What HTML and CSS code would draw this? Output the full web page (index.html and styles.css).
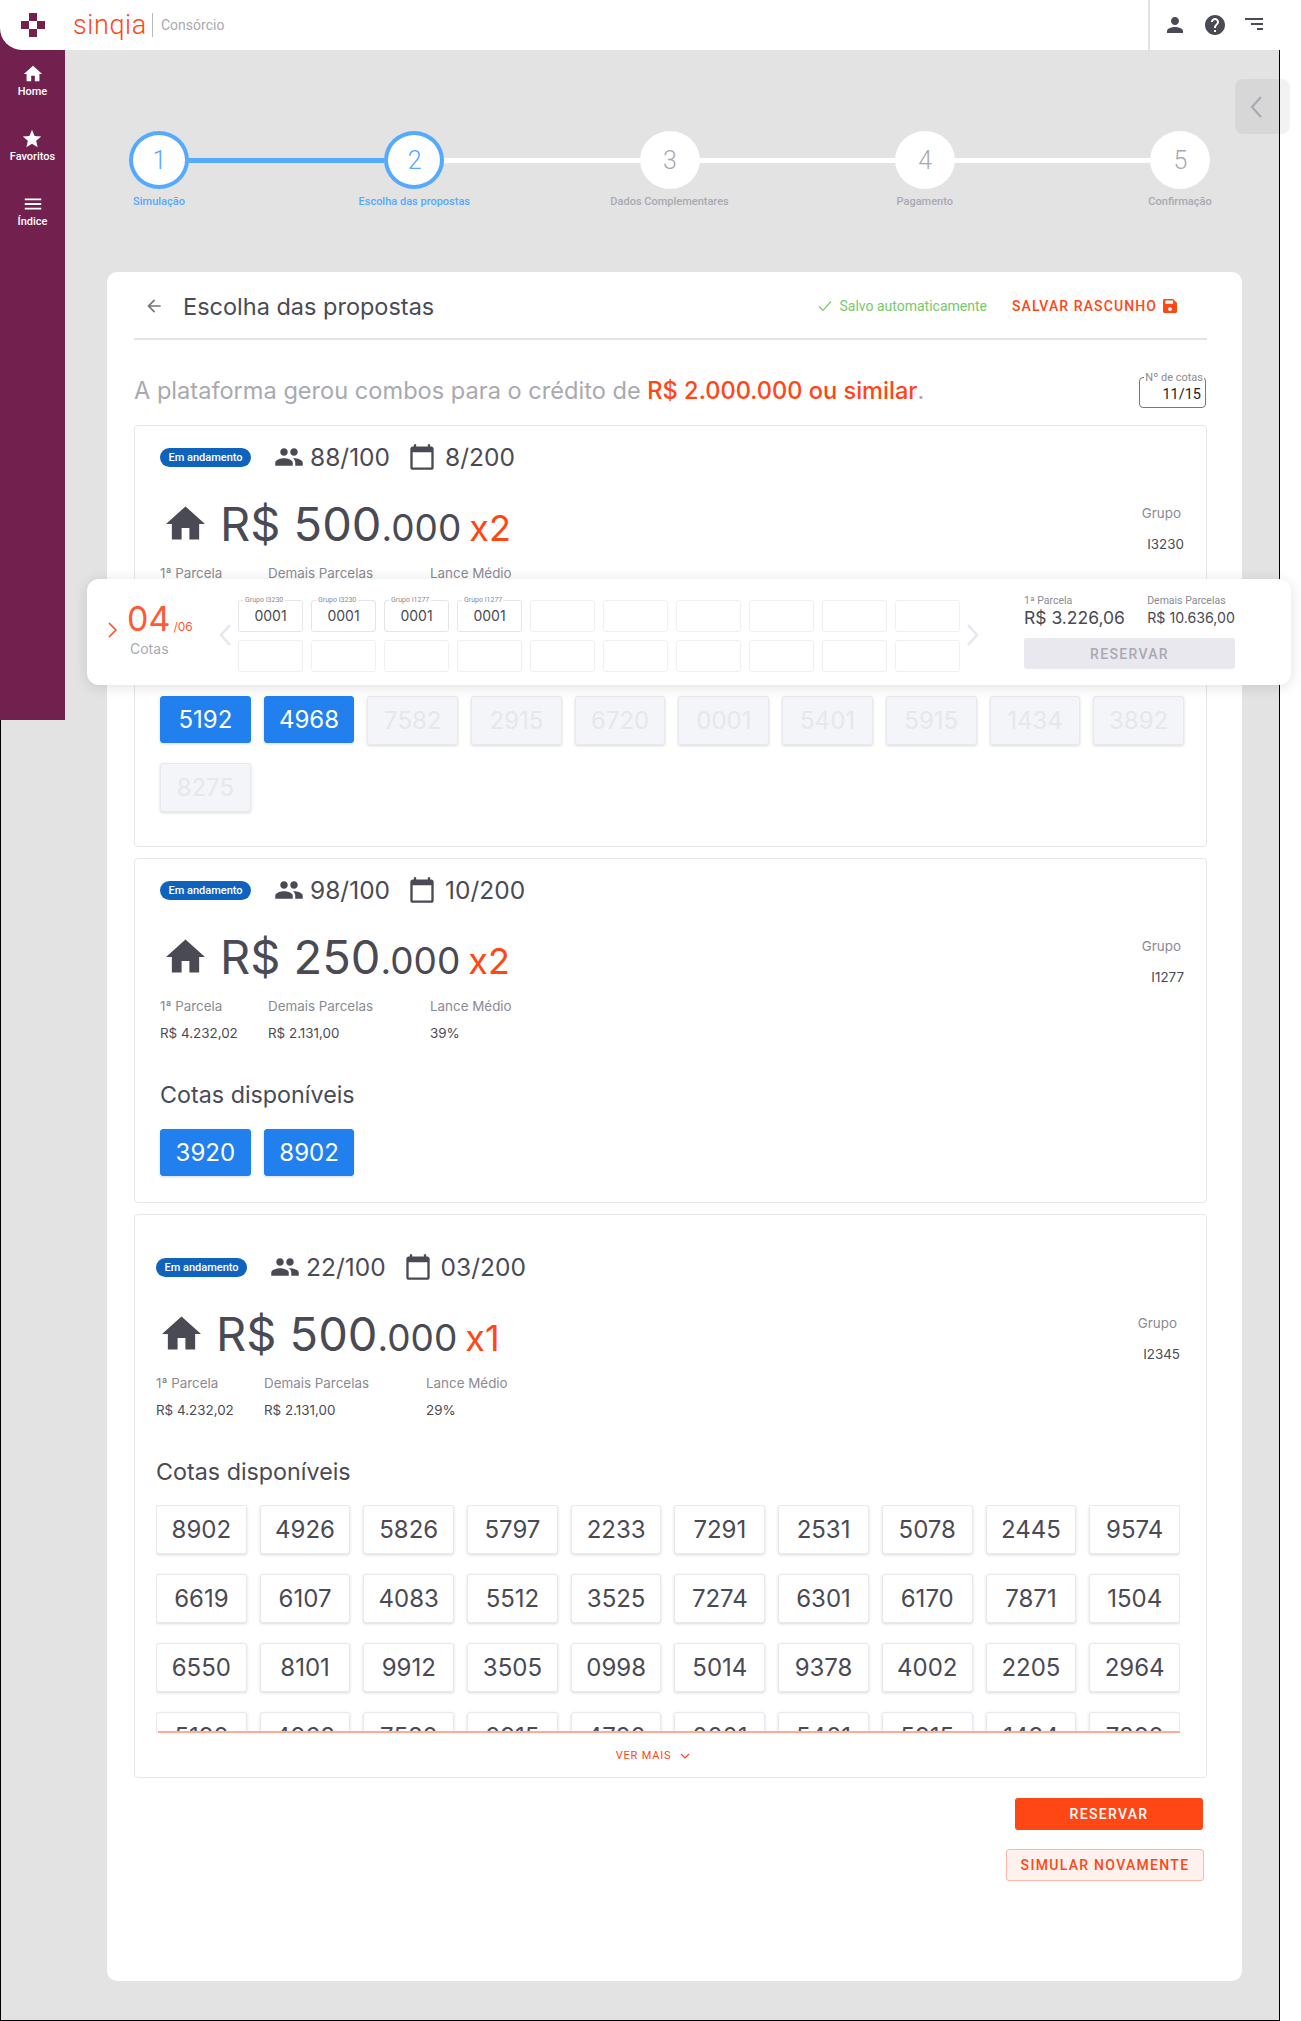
FILE: index.html
```html
<!DOCTYPE html>
<html lang="pt-BR">
<head>
    <meta charset="UTF-8">
    <meta name="viewport" content="width=device-width, initial-scale=1.0">
    <title>Sinqia Consórcio - Escolha das propostas</title>
    <link rel="stylesheet" href="styles.css">
</head>
<body>
    <header class="topbar">
        <div class="brand">
            <svg class="brand-mark" viewBox="0 0 24 24" width="24" height="24">
                <rect x="8" y="0" width="8" height="8" fill="#72214f"/>
                <rect x="0" y="8" width="8" height="8" fill="#72214f"/>
                <rect x="16" y="8" width="8" height="8" fill="#72214f"/>
                <rect x="8" y="16" width="8" height="8" fill="#72214f"/>
            </svg>
            <span class="brand-name">sinqia</span>
            <span class="brand-product">Consórcio</span>
        </div>
        <div class="topbar-actions">
            <svg class="action-icon" viewBox="0 0 24 24"><path d="M12 12c2.21 0 4-1.79 4-4s-1.79-4-4-4-4 1.79-4 4 1.79 4 4 4zm0 2c-2.67 0-8 1.34-8 4v2h16v-2c0-2.66-5.33-4-8-4z"/></svg>
            <svg class="action-icon" viewBox="0 0 24 24"><path d="M12 2C6.48 2 2 6.48 2 12s4.48 10 10 10 10-4.48 10-10S17.52 2 12 2zm1 17h-2v-2h2v2zm2.07-7.75l-.9.92C13.45 12.9 13 13.5 13 15h-2v-.5c0-1.1.45-2.1 1.17-2.83l1.24-1.26c.37-.36.59-.86.59-1.41 0-1.1-.9-2-2-2s-2 .9-2 2H8c0-2.21 1.79-4 4-4s4 1.79 4 4c0 .88-.36 1.68-.93 2.25z"/></svg>
            <svg class="action-icon" viewBox="0 0 24 24"><path d="M3 5h18v2H3zM9 10h12v2H9zM15 15h6v2h-6z"/></svg>
        </div>
    </header>

    <div class="frame">
        <nav class="sidebar">
            <a class="side-item"><svg viewBox="0 0 24 24"><path d="M10 20v-6h4v6h5v-8h3L12 3 2 12h3v8z"/></svg>Home</a>
            <a class="side-item"><svg viewBox="0 0 24 24"><path d="M12 17.27L18.18 21l-1.64-7.03L22 9.24l-7.19-.61L12 2 9.19 8.63 2 9.24l5.46 4.73L5.82 21z"/></svg>Favoritos</a>
            <a class="side-item"><svg viewBox="0 0 24 24"><path d="M3 18h18v-2H3v2zm0-5h18v-2H3v2zm0-7v2h18V6H3z"/></svg>Índice</a>
        </nav>

        <main class="main">
            <div class="stepper">
                <div class="step done"><div class="step-circle">1</div><div class="step-label">Simulação</div></div>
                <div class="step-line done"></div>
                <div class="step done"><div class="step-circle">2</div><div class="step-label">Escolha das propostas</div></div>
                <div class="step-line"></div>
                <div class="step"><div class="step-circle">3</div><div class="step-label">Dados Complementares</div></div>
                <div class="step-line"></div>
                <div class="step"><div class="step-circle">4</div><div class="step-label">Pagamento</div></div>
                <div class="step-line"></div>
                <div class="step"><div class="step-circle">5</div><div class="step-label">Confirmação</div></div>
            </div>

            <section class="panel">
                <div class="panel-head">
                    <svg class="back-icon" viewBox="0 0 24 24"><path d="M20 11H7.83l5.59-5.59L12 4l-8 8 8 8 1.41-1.41L7.83 13H20v-2z"/></svg>
                    <h1 class="panel-title">Escolha das propostas</h1>
                    <span class="saved">
                        <svg viewBox="0 0 14 14"><path d="M1 7.5l4 4 8-9" fill="none" stroke="#77c96a" stroke-width="1.2"/></svg>
                        Salvo automaticamente
                    </span>
                    <a class="draft">SALVAR RASCUNHO
                        <svg viewBox="0 0 18 18"><path d="M13 0H2C.9 0 0 .9 0 2v14c0 1.1.9 2 2 2h14c1.1 0 2-.9 2-2V5l-5-5zM9 15.5c-1.4 0-2.5-1.1-2.5-2.5s1.1-2.5 2.5-2.5 2.5 1.1 2.5 2.5-1.1 2.5-2.5 2.5zM13 6H3V2h10v4z"/></svg>
                    </a>
                </div>

                <div class="intro">
                    <p class="intro-text">A plataforma gerou combos para o crédito de <strong>R$ 2.000.000 ou similar</strong>.</p>
                    <div class="quota-field">
                        <span class="quota-legend">Nº de cotas</span>
                        11/15
                    </div>
                </div>

                <article class="card card-first">
                    <div class="card-top">
                        <div class="card-info">
                            <div class="card-head">
                                <span class="badge">Em andamento</span>
                                <svg class="head-icon people" viewBox="0 0 24 24"><path d="M16 11c1.66 0 2.99-1.34 2.99-3S17.66 5 16 5c-1.66 0-3 1.34-3 3s1.34 3 3 3zm-8 0c1.66 0 2.99-1.34 2.99-3S9.66 5 8 5C6.34 5 5 6.34 5 8s1.34 3 3 3zm0 2c-2.33 0-7 1.17-7 3.5V19h14v-2.5c0-2.33-4.67-3.5-7-3.5zm8 0c-.29 0-.62.02-.97.05 1.16.84 1.97 1.97 1.97 3.45V19h6v-2.5c0-2.33-4.67-3.5-7-3.5z"/></svg>
                                <span class="head-value">88/100</span>
                                <svg class="head-icon calendar" viewBox="0 0 24 24"><path d="M20 3h-1V1h-2v2H7V1H5v2H4c-1.1 0-2 .9-2 2v16c0 1.1.9 2 2 2h16c1.1 0 2-.9 2-2V5c0-1.1-.9-2-2-2zm0 18H4V8h16v13z"/></svg>
                                <span class="head-value">8/200</span>
                            </div>
                            <div class="amount">
                                <svg class="amount-icon" viewBox="2 3 20 17"><path d="M10 20v-6h4v6h5v-8h3L12 3 2 12h3v8z"/></svg>
                                <span class="amount-main">R$ 500</span><span class="amount-sub">.000</span>
                                <span class="amount-times">x2</span>
                            </div>
                            <div class="terms">
                                <div class="term term-a"><span>1ª Parcela</span><b>R$ 4.232,02</b></div>
                                <div class="term term-b"><span>Demais Parcelas</span><b>R$ 2.131,00</b></div>
                                <div class="term"><span>Lance Médio</span><b>39%</b></div>
                            </div>
                        </div>
                        <div class="group"><span>Grupo</span><b>I3230</b></div>
                    </div>
                    <h2 class="quotas-title">Cotas disponíveis</h2>
                    <div class="tiles">
                        <span class="tile selected">5192</span>
                        <span class="tile selected">4968</span>
                        <span class="tile disabled">7582</span>
                        <span class="tile disabled">2915</span>
                        <span class="tile disabled">6720</span>
                        <span class="tile disabled">0001</span>
                        <span class="tile disabled">5401</span>
                        <span class="tile disabled">5915</span>
                        <span class="tile disabled">1434</span>
                        <span class="tile disabled">3892</span>
                        <span class="tile disabled">8275</span>
                    </div>
                </article>

                <article class="card">
                    <div class="card-top">
                        <div class="card-info">
                            <div class="card-head">
                                <span class="badge">Em andamento</span>
                                <svg class="head-icon people" viewBox="0 0 24 24"><path d="M16 11c1.66 0 2.99-1.34 2.99-3S17.66 5 16 5c-1.66 0-3 1.34-3 3s1.34 3 3 3zm-8 0c1.66 0 2.99-1.34 2.99-3S9.66 5 8 5C6.34 5 5 6.34 5 8s1.34 3 3 3zm0 2c-2.33 0-7 1.17-7 3.5V19h14v-2.5c0-2.33-4.67-3.5-7-3.5zm8 0c-.29 0-.62.02-.97.05 1.16.84 1.97 1.97 1.97 3.45V19h6v-2.5c0-2.33-4.67-3.5-7-3.5z"/></svg>
                                <span class="head-value">98/100</span>
                                <svg class="head-icon calendar" viewBox="0 0 24 24"><path d="M20 3h-1V1h-2v2H7V1H5v2H4c-1.1 0-2 .9-2 2v16c0 1.1.9 2 2 2h16c1.1 0 2-.9 2-2V5c0-1.1-.9-2-2-2zm0 18H4V8h16v13z"/></svg>
                                <span class="head-value">10/200</span>
                            </div>
                            <div class="amount">
                                <svg class="amount-icon" viewBox="2 3 20 17"><path d="M10 20v-6h4v6h5v-8h3L12 3 2 12h3v8z"/></svg>
                                <span class="amount-main">R$ 250</span><span class="amount-sub">.000</span>
                                <span class="amount-times">x2</span>
                            </div>
                            <div class="terms">
                                <div class="term term-a"><span>1ª Parcela</span><b>R$ 4.232,02</b></div>
                                <div class="term term-b"><span>Demais Parcelas</span><b>R$ 2.131,00</b></div>
                                <div class="term"><span>Lance Médio</span><b>39%</b></div>
                            </div>
                        </div>
                        <div class="group"><span>Grupo</span><b>I1277</b></div>
                    </div>
                    <h2 class="quotas-title">Cotas disponíveis</h2>
                    <div class="tiles">
                        <span class="tile selected">3920</span>
                        <span class="tile selected">8902</span>
                    </div>
                </article>

                <article class="card card-last">
                    <div class="card-top">
                        <div class="card-info">
                            <div class="card-head">
                                <span class="badge">Em andamento</span>
                                <svg class="head-icon people" viewBox="0 0 24 24"><path d="M16 11c1.66 0 2.99-1.34 2.99-3S17.66 5 16 5c-1.66 0-3 1.34-3 3s1.34 3 3 3zm-8 0c1.66 0 2.99-1.34 2.99-3S9.66 5 8 5C6.34 5 5 6.34 5 8s1.34 3 3 3zm0 2c-2.33 0-7 1.17-7 3.5V19h14v-2.5c0-2.33-4.67-3.5-7-3.5zm8 0c-.29 0-.62.02-.97.05 1.16.84 1.97 1.97 1.97 3.45V19h6v-2.5c0-2.33-4.67-3.5-7-3.5z"/></svg>
                                <span class="head-value">22/100</span>
                                <svg class="head-icon calendar" viewBox="0 0 24 24"><path d="M20 3h-1V1h-2v2H7V1H5v2H4c-1.1 0-2 .9-2 2v16c0 1.1.9 2 2 2h16c1.1 0 2-.9 2-2V5c0-1.1-.9-2-2-2zm0 18H4V8h16v13z"/></svg>
                                <span class="head-value">03/200</span>
                            </div>
                            <div class="amount">
                                <svg class="amount-icon" viewBox="2 3 20 17"><path d="M10 20v-6h4v6h5v-8h3L12 3 2 12h3v8z"/></svg>
                                <span class="amount-main">R$ 500</span><span class="amount-sub">.000</span>
                                <span class="amount-times">x1</span>
                            </div>
                            <div class="terms">
                                <div class="term term-a"><span>1ª Parcela</span><b>R$ 4.232,02</b></div>
                                <div class="term term-b"><span>Demais Parcelas</span><b>R$ 2.131,00</b></div>
                                <div class="term"><span>Lance Médio</span><b>29%</b></div>
                            </div>
                        </div>
                        <div class="group"><span>Grupo</span><b>I2345</b></div>
                    </div>
                    <h2 class="quotas-title">Cotas disponíveis</h2>
                    <div class="tiles tiles-clipped">
                        <span class="tile">8902</span><span class="tile">4926</span><span class="tile">5826</span><span class="tile">5797</span><span class="tile">2233</span><span class="tile">7291</span><span class="tile">2531</span><span class="tile">5078</span><span class="tile">2445</span><span class="tile">9574</span>
                        <span class="tile">6619</span><span class="tile">6107</span><span class="tile">4083</span><span class="tile">5512</span><span class="tile">3525</span><span class="tile">7274</span><span class="tile">6301</span><span class="tile">6170</span><span class="tile">7871</span><span class="tile">1504</span>
                        <span class="tile">6550</span><span class="tile">8101</span><span class="tile">9912</span><span class="tile">3505</span><span class="tile">0998</span><span class="tile">5014</span><span class="tile">9378</span><span class="tile">4002</span><span class="tile">2205</span><span class="tile">2964</span>
                        <span class="tile">5192</span><span class="tile">4968</span><span class="tile">7582</span><span class="tile">2915</span><span class="tile">4720</span><span class="tile">0001</span><span class="tile">5401</span><span class="tile">5915</span><span class="tile">1434</span><span class="tile">7892</span>
                    </div>
                    <a class="more">VER MAIS
                        <svg viewBox="0 0 10 6"><path d="M1 1l4 4 4-4" fill="none" stroke="#ff4615" stroke-width="1.2"/></svg>
                    </a>
                </article>

                <div class="panel-actions">
                    <button class="btn btn-primary">RESERVAR</button>
                    <button class="btn btn-outline">SIMULAR NOVAMENTE</button>
                </div>
            </section>
        </main>

        <!-- barra flutuante com as cotas escolhidas -->
        <aside class="cart">
            <svg class="cart-toggle" viewBox="0 0 9 16"><path d="M1 1l7 7-7 7" fill="none" stroke="#ff4615" stroke-width="1.5"/></svg>
            <div class="cart-count">
                <div><span class="count-now">04</span><span class="count-total">/06</span></div>
                <div class="count-label">Cotas</div>
            </div>
            <svg class="cart-arrow" viewBox="0 0 12 22"><path d="M11 1L2 11l9 10" fill="none" stroke="#e6e7ee" stroke-width="2.5"/></svg>
            <div class="slots">
                <div class="slot filled"><span class="slot-legend">Grupo I3230</span>0001</div>
                <div class="slot filled"><span class="slot-legend">Grupo I3230</span>0001</div>
                <div class="slot filled"><span class="slot-legend">Grupo I1277</span>0001</div>
                <div class="slot filled"><span class="slot-legend">Grupo I1277</span>0001</div>
                <div class="slot"></div><div class="slot"></div><div class="slot"></div><div class="slot"></div><div class="slot"></div><div class="slot"></div>
                <div class="slot"></div><div class="slot"></div><div class="slot"></div><div class="slot"></div><div class="slot"></div><div class="slot"></div><div class="slot"></div><div class="slot"></div><div class="slot"></div><div class="slot"></div>
            </div>
            <svg class="cart-arrow" viewBox="0 0 12 22"><path d="M1 1l9 10-9 10" fill="none" stroke="#e6e7ee" stroke-width="2.5"/></svg>
            <div class="cart-summary">
                <div class="summary-values">
                    <div class="summary-first"><span>1ª Parcela</span><b>R$ 3.226,06</b></div>
                    <div class="summary-rest"><span>Demais Parcelas</span><b>R$ 10.636,00</b></div>
                </div>
                <button class="btn btn-disabled">RESERVAR</button>
            </div>
        </aside>

        <div class="side-tab">
            <svg viewBox="0 0 12 22"><path d="M11 1L2 11l9 10" fill="none" stroke="#a9a9b2" stroke-width="2.2"/></svg>
        </div>
    </div>
</body>
</html>
```

FILE: styles.css
```css
* {
    margin: 0;
    padding: 0;
    box-sizing: border-box;
}

body {
    font-family: Inter, Roboto, sans-serif;
    background: white;
    color: #4a4a55;
    width: 1301px;
}

/* topo */

.topbar {
    width: 1280px;
    height: 50px;
    display: flex;
    background: linear-gradient(to right, #72214f 30px, white 30px);
}

.brand {
    flex: 1;
    display: flex;
    align-items: center;
    background: white;
    border-bottom-left-radius: 22px;
    padding-left: 21px;
}

.brand-mark {
    flex: none;
}

.brand-name {
    margin-left: 28px;
    width: 80px;
    height: 24px;
    display: flex;
    align-items: center;
    font-family: Roboto, sans-serif;
    font-weight: 300;
    font-size: 27px;
    letter-spacing: 0.6px;
    color: #ff4615;
    border-right: 1px solid #bbb;
}

.brand-product {
    margin-left: 8px;
    font-family: Roboto, sans-serif;
    font-size: 14px;
    color: #a9a9b2;
}

.topbar-actions {
    width: 132px;
    flex: none;
    display: flex;
    align-items: center;
    gap: 15.5px;
    padding-left: 13px;
    background: white;
    border-left: 2px solid #e3e3e3;
}

.action-icon {
    width: 24px;
    height: 24px;
    fill: #4a4a55;
}

/* moldura */

.frame {
    position: relative;
    width: 1280px;
    height: 1971px;
    display: flex;
    align-items: flex-start;
    background: #e3e3e3;
    border-left: 1px solid black;
    border-right: 1px solid black;
    border-bottom: 1px solid black;
}

.sidebar {
    flex: none;
    width: 65px;
    height: 670px;
    margin-left: -1px;
    background: #72214f;
    display: flex;
    flex-direction: column;
    align-items: center;
    padding-top: 13px;
}

.side-item {
    height: 65px;
    display: flex;
    flex-direction: column;
    align-items: center;
    font-family: Roboto, sans-serif;
    font-size: 11px;
    font-weight: 500;
    color: white;
}

.side-item svg {
    width: 22px;
    height: 22px;
    fill: white;
}

.main {
    flex: 1;
    padding-top: 81px;
}

/* passos */

.stepper {
    width: 1081px;
    margin-left: 64px;
    display: flex;
    align-items: flex-start;
}

.step {
    flex: none;
    width: 60px;
    display: flex;
    flex-direction: column;
    align-items: center;
}

.step-circle {
    width: 60px;
    height: 58px;
    border-radius: 50%;
    background: white;
    display: flex;
    align-items: center;
    justify-content: center;
    padding-left: 1px;
    font-family: Roboto, sans-serif;
    font-weight: 300;
    font-size: 25px;
    color: #a9a9b2;
}

.step.done .step-circle {
    border: 4px solid #55a9ff;
    color: #55a9ff;
}

.step-label {
    margin-top: 6px;
    white-space: nowrap;
    font-family: Roboto, sans-serif;
    font-size: 11px;
    font-weight: 500;
    color: #a9a9b2;
}

.step.done .step-label {
    color: #55a9ff;
}

.step-line {
    flex: 1;
    height: 5px;
    margin-top: 27px;
    background: white;
}

.step-line.done {
    background: #55a9ff;
}

/* painel */

.panel {
    width: 1135px;
    height: 1709px;
    margin: 64px 0 0 42px;
    padding: 0 35px 0 27px;
    background: white;
    border-radius: 10px;
}

.panel-head {
    height: 68px;
    padding-top: 2px;
    display: flex;
    align-items: center;
    border-bottom: 2px solid #e3e3e3;
}

.back-icon {
    width: 20px;
    height: 20px;
    margin-left: 10px;
    fill: #777;
}

.panel-title {
    margin-left: 19px;
    flex: 1;
    font-size: 23.5px;
    font-weight: 400;
}

.saved {
    display: flex;
    align-items: center;
    gap: 7px;
    font-family: Roboto, sans-serif;
    font-size: 14px;
    color: #77c96a;
}

.saved svg {
    width: 14px;
    height: 14px;
}

.draft {
    display: flex;
    align-items: center;
    gap: 6px;
    margin: 0 30px 0 25px;
    font-family: Roboto, sans-serif;
    font-size: 14px;
    font-weight: 500;
    letter-spacing: 1.1px;
    color: #ff4615;
}

.draft svg {
    width: 14px;
    height: 14px;
    fill: #ff4615;
}

.intro {
    height: 85px;
    display: flex;
    align-items: flex-start;
    justify-content: space-between;
    padding-top: 37px;
}

.intro-text {
    margin-top: -1px;
    font-size: 23.6px;
    line-height: 30px;
    color: #a9a9b2;
}

.intro-text strong {
    font-weight: 500;
    color: #ff4615;
}

.quota-field {
    position: relative;
    width: 67px;
    height: 31px;
    margin-right: 1px;
    border: 1px solid #777;
    border-radius: 4px;
    font-family: Roboto, sans-serif;
    font-size: 14.5px;
    line-height: 29px;
    text-align: right;
    padding-right: 4px;
    padding-top: 2px;
    color: #222;
}

.quota-legend {
    position: absolute;
    top: -7px;
    right: 1px;
    padding: 0 1px;
    background: white;
    font-size: 11px;
    line-height: 13px;
    color: #8a8a93;
}

/* cards de proposta */

.card {
    height: 345px;
    margin-bottom: 11px;
    padding: 15px 22px 0 25px;
    border: 1px solid #e6e6ec;
    border-radius: 4px;
}

.card-first {
    height: 422px;
}

.card-last {
    height: 564px;
    margin-bottom: 0;
    padding: 36px 26px 0 21px;
}

.card-top {
    display: flex;
    justify-content: space-between;
}

.card-head {
    height: 32px;
    display: flex;
    align-items: center;
}

.badge {
    width: 91px;
    height: 19px;
    border-radius: 10px;
    background: #0f63bd;
    color: white;
    font-family: Roboto, sans-serif;
    font-size: 11px;
    font-weight: 500;
    line-height: 19px;
    text-align: center;
}

.head-icon {
    fill: #4a4a55;
    flex: none;
}

.head-icon.people {
    width: 30px;
    height: 30px;
    margin-left: 23px;
}

.head-icon.calendar {
    width: 28px;
    height: 28px;
    margin-left: 18px;
}

.head-value {
    margin-left: 6px;
    font-size: 24.5px;
}

.calendar + .head-value {
    margin-left: 9px;
}

.amount {
    height: 60px;
    margin-top: 22px;
    display: flex;
    align-items: baseline;
}

.amount-icon {
    width: 39px;
    height: 36px;
    margin: 0 15px 0 6px;
    fill: #4a4a55;
}

.amount-main {
    font-size: 47px;
}

.amount-sub {
    font-size: 37px;
}

.amount-times {
    margin-left: 8px;
    font-size: 36px;
    color: #ff4615;
}

.terms {
    display: flex;
    margin-top: 10px;
}

.term {
    display: flex;
    flex-direction: column;
    gap: 11px;
    font-size: 13.4px;
    line-height: 16px;
    color: #8a8a93;
}

.term b {
    font-weight: 400;
    color: #4a4a55;
}

.term-a {
    width: 108px;
}

.term-b {
    width: 162px;
}

.group {
    display: flex;
    flex-direction: column;
    align-items: flex-end;
    gap: 15px;
    padding-top: 64px;
    font-size: 13.4px;
    line-height: 16px;
    color: #8a8a93;
}

.group span {
    margin-right: 3px;
}

.group b {
    font-weight: 400;
    color: #4a4a55;
}

.quotas-title {
    margin-top: 39px;
    font-size: 23.3px;
    font-weight: 400;
    line-height: 30px;
}

.tiles {
    display: grid;
    grid-template-columns: repeat(10, 1fr);
    column-gap: 13px;
    row-gap: 18px;
    margin-top: 19px;
}

.tile {
    height: 49px;
    display: flex;
    align-items: center;
    justify-content: center;
    border: 1px solid #e8e8ee;
    border-radius: 3px;
    box-shadow: 0 1px 3px rgba(0, 0, 0, 0.15);
    background: white;
    font-size: 24px;
}

.tile.selected {
    height: 47px;
    background: #2180ee;
    border-color: #2180ee;
    color: white;
}

.tile.disabled {
    background: #f4f5f8;
    color: #e6e7ee;
}

.tiles-clipped {
    height: 228px;
    row-gap: 20px;
    overflow: hidden;
    padding-bottom: 2px;
    position: relative;
    margin-top: 18px;
}

.tiles-clipped::after {
    content: "";
    position: absolute;
    left: 2px;
    right: 0;
    bottom: 0;
    height: 2px;
    background: #ffab97;
}

.more {
    display: flex;
    align-items: center;
    justify-content: center;
    gap: 9px;
    margin-top: 16px;
    padding-right: 30px;
    font-family: Roboto, sans-serif;
    font-size: 11px;
    letter-spacing: 0.8px;
    color: #ff4615;
}

.more svg {
    width: 10px;
    height: 6px;
}

.panel-actions {
    display: flex;
    flex-direction: column;
    align-items: flex-end;
    gap: 19px;
    margin-top: 20px;
    padding-right: 3px;
}

.btn {
    border: none;
    border-radius: 3px;
    font-family: Roboto, sans-serif;
    font-size: 14px;
    font-weight: 500;
    letter-spacing: 1.3px;
}

.btn-primary {
    width: 188px;
    height: 32px;
    margin-right: 1px;
    background: #ff4615;
    color: white;
}

.btn-outline {
    width: 198px;
    height: 32px;
    background: #fff2ee;
    border: 1px solid #ffb8a5;
    color: #ff4615;
}

/* barra flutuante */

.cart {
    position: absolute;
    left: 86px;
    top: 529px;
    width: 1204px;
    height: 106px;
    display: flex;
    align-items: flex-start;
    background: white;
    border-radius: 12px;
    box-shadow: 0 2px 14px rgba(0, 0, 0, 0.12);
}

.cart-toggle {
    width: 9px;
    height: 16px;
    margin: 43px 0 0 21px;
}

.cart-count {
    width: 92px;
    margin-left: 10px;
    padding-top: 22px;
    flex: none;
}

.count-now {
    font-size: 34px;
    line-height: 36px;
    color: #ff5a36;
}

.count-total {
    margin-left: 3px;
    font-size: 12px;
    color: #ff5a36;
}

.count-label {
    margin: 3px 0 0 3px;
    font-size: 14px;
    color: #a9a9b2;
}

.cart-arrow {
    flex: none;
    width: 12px;
    height: 22px;
    margin-top: 45px;
}

.slots {
    width: 722px;
    margin: 21px 7px 0;
    display: grid;
    grid-template-columns: repeat(10, 65px);
    column-gap: 8px;
    row-gap: 8px;
}

.slot {
    position: relative;
    height: 32px;
    border: 1px solid #f0f0f3;
    border-radius: 3px;
    font-size: 14px;
    line-height: 30px;
    text-align: center;
}

.slot.filled {
    border: 1.5px solid #e4e5ea;
}

.slot-legend {
    position: absolute;
    top: -5px;
    left: 4px;
    padding: 0 2px;
    background: white;
    font-family: Roboto, sans-serif;
    font-size: 7px;
    line-height: 9px;
    color: #8a8a93;
}

.cart-summary {
    width: 211px;
    margin: 15px 0 0 45px;
    flex: none;
}

.summary-values {
    display: flex;
    align-items: flex-end;
}

.summary-values div {
    display: flex;
    flex-direction: column;
    white-space: nowrap;
}

.summary-values span {
    font-family: Roboto, sans-serif;
    font-size: 10.5px;
    color: #8a8a93;
}

.summary-first {
    width: 124px;
}

.summary-first b {
    font-size: 17.5px;
    font-weight: 400;
}

.summary-rest b {
    font-size: 14.2px;
    font-weight: 400;
    line-height: 21px;
}

.btn-disabled {
    width: 211px;
    height: 31px;
    margin-top: 10px;
    background: #e8e8ee;
    color: #a9a9b2;
}

.side-tab {
    position: absolute;
    left: 1234px;
    top: 29px;
    width: 55px;
    height: 55px;
    display: flex;
    align-items: center;
    padding-left: 15px;
    border-radius: 8px;
    background: rgba(0, 0, 0, 0.05);
}

.side-tab svg {
    width: 12px;
    height: 22px;
}
```
